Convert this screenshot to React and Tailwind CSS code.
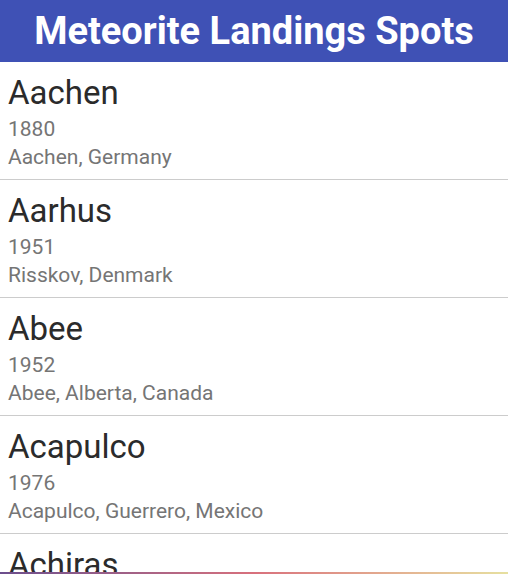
import React from "react";

const spots = [
  { name: "Aachen", year: 1880, place: "Aachen, Germany" },
  { name: "Aarhus", year: 1951, place: "Risskov, Denmark" },
  { name: "Abee", year: 1952, place: "Abee, Alberta, Canada" },
  { name: "Acapulco", year: 1976, place: "Acapulco, Guerrero, Mexico" },
  { name: "Achiras", year: 1902, place: "Achiras, Córdoba, Argentina" },
];

export default function App() {
  return (
    <div className="min-h-screen bg-white font-['Roboto','Liberation_Sans',sans-serif]">
      {/* Header */}
      <div className="h-[62px] bg-[#3f51b5] flex items-center justify-center">
        <h1 className="text-white font-bold text-[38px] leading-none">Meteorite Landings Spots</h1>
      </div>

      {/* List */}
      <div>
        {spots.map((s) => (
          <div key={s.name} className="px-2 pt-[12px] pb-[8px] border-b border-[#cccccc]">
            <div className="text-[33px] leading-[38px] text-[#2b2b2b]">{s.name}</div>
            <div className="mt-[3px] text-[21px] leading-[28px] text-[#757575]">{s.year}</div>
            <div className="text-[21px] leading-[28px] text-[#757575]">{s.place}</div>
          </div>
        ))}
      </div>

      {/* bottom accent strip */}
      <div className="fixed left-0 right-0 bottom-0 h-[2px] bg-gradient-to-r from-[#6b4d8c] via-[#d8707c] to-[#e6e0a0]" />
    </div>
  );
}
